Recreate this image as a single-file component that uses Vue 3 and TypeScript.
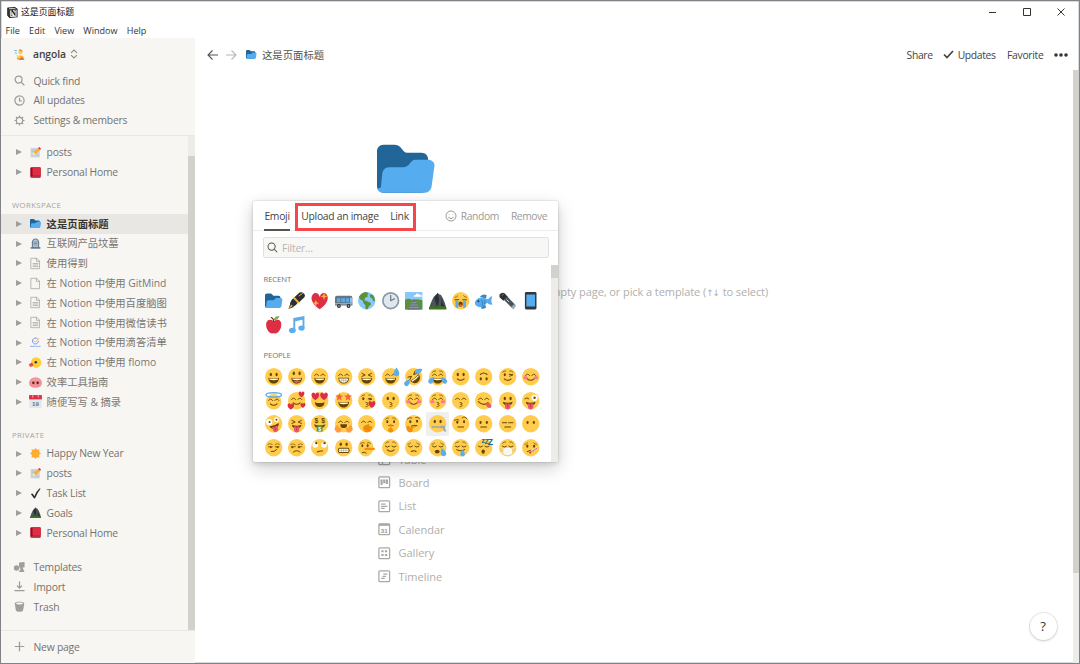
<script setup lang="ts">
import { defineComponent, h } from 'vue'

interface Shape {
  d?: string
  f?: string
  s?: string
  w?: number
  t?: string
  text?: string
  x?: number
  y?: number
  size?: number
}

const BROWN = '#664500'
const YELLOW = '#ffcc4d'
const RED = '#dd2e44'
const BLUE = '#5dadec'

const fill = (d: string, f = BROWN, t?: string): Shape => ({ d, f, t })
const line = (d: string, w = 2, s = BROWN, t?: string): Shape => ({ d, f: 'none', s, w, t })
const oval = (x: number, y: number, rx: number, ry = rx, f = BROWN, t?: string): Shape =>
  fill(`M${x - rx} ${y}a${rx} ${ry} 0 1 0 ${2 * rx} 0a${rx} ${ry} 0 1 0 ${-2 * rx} 0z`, f, t)
const label = (text: string, x: number, y: number, size: number, f: string): Shape => ({ text, x, y, size, f })
const turn = (list: Shape[], t: string): Shape[] => list.map(p => ({ ...p, t: p.t ? `${t} ${p.t}` : t }))

const base = [oval(18, 18, 18, 18, YELLOW)]
const eyes = [oval(12, 13.5, 2.4, 3.6), oval(24, 13.5, 2.4, 3.6)]
const lowEyes = [oval(11.5, 15.5, 2.3, 3), oval(24.5, 15.5, 2.3, 3)]
const happyEyes = [line('M7.5 15.5q4-6 8 0'), line('M20.5 15.5q4-6 8 0')]
const shutEyes = [line('M7 15q4 4 8.500 0'), line('M20.500 15q4 4 8.500 0')]
const squint = [line('M8 11l7 3.500l-7 3'), line('M28 11l-7 3.500l7 3')]
const grin = [fill('M7 20q11 3 22 0c0 8-5 12-11 12s-11-4-11-12z'), fill('M9 21.500q9 2 18 0v2.500q-9 2.500-18 0z', '#fff')]
const smile = [line('M11 22.500q7 6 14 0', 2.2)]
const blush = [oval(7, 20, 4.5, 3.5, '#ff7892'), oval(29, 20, 4.5, 3.5, '#ff7892')]
const kiss = [line('M16.5 21.500c6 0 5 4 1 4c5 0 5 5-1 5', 1.8)]
const flat = [line('M12 25h12', 2.2)]
const tongue = [fill('M8 20q10 4 20 0c0 5-4 8-10 8s-10-3-10-8z'), fill('M12.500 24h11v7a5.500 5 0 0 1-11 0z', '#e8596e'), line('M18 24v7', 1.2, '#be1931')]
const heart = (x: number, y: number, k: number): Shape =>
  fill('M0 8C-12 0-8-8-4-8Q-1-8 0-4Q1-8 4-8C8-8 12 0 0 8z', RED, `translate(${x} ${y}) scale(${k})`)
const star = (x: number, y: number): Shape =>
  fill('M0-8l2 5l6 .3l-4.500 4l1.500 6.500l-5-3.500l-5 3.500l1.500-6.500l-4.500-4l6-.3z', '#f0643f', `translate(${x} ${y})`)
const tear = (x: number, y: number, r = 0, k = 1): Shape =>
  fill('M0-8C4-3 5 0 5 3a5 5 0 0 1-10 0C-5 0-4-3 0-8z', BLUE, `translate(${x} ${y}) rotate(${r}) scale(${k})`)
const brows = [line('M7 9q3-4 7-3', 1.4), line('M22 6q4-1 7 3', 1.4)]
const sadBrows = [line('M6 11q4 0 6-3', 1.4), line('M30 11q-4 0-6-3', 1.4)]
const laugh = [...squint, ...grin]

const art: Record<string, Shape[]> = {
  folder: [
    fill('M0 29c0 2.200 1.800 4 4 4h24c2.200 0 4-1.800 4-4V12c0-2.200-1.800-4-4-4h-9c-3.560 0-3-5-8.440-5H4C1.800 3 0 4.800 0 7z', '#226699'),
    fill('M32 12.300h-8c-3.600 0-3 4.700-8 4.700H7.500c-2.200 0-4 1.800-4.200 4L2.500 29c-.2 1.500-2 1.700-2.500.5C0 31.500 1.800 33 4 33h26c2.200 0 4-1.800 4.200-4L36 16c.2-2.200-1.800-3.700-4-3.700z', '#55acee'),
  ],
  pen: [
    fill('M1 35l4-11l7 7z', '#292f33'), fill('M4 24q1-7 8-12l9 9q-4 7-11 10z', '#292f33'),
    fill('M12 12L24 1q5-2 9 2q4 4 1 8L22 22z', '#292f33'), fill('M10 13l3-3l11 11l-3 3z', '#ffac33'), fill('M1 35l6-9l3 3z', '#ffac33'), line('M23 8l7-5', 2, '#ffac33'),
  ],
  hearts: [heart(18, 19, 2.1), fill('M27 1l2 6l6 2l-6 2l-2 6l-2-6l-6-2l6-2z', '#ffac33'), fill('M10 16l2 5l5 2l-5 2l-2 5l-2-5l-5-2l5-2z', '#ffac33')],
  bus: [
    fill('M0 12q0-4 4-4h28q4 0 4 4v16H0z', '#66757f'), fill('M4 13h7v8H4zM13 13h8v8h-8zM23 13h6v8h-6z', '#55acee'), fill('M31 12h4v10h-4z', '#88c9f9'),
    fill('M0 23h36v3H0z', '#99aab5'), oval(8, 29, 4, 4, '#292f33'), oval(28, 29, 4, 4, '#292f33'), oval(8, 29, 1.700, 1.700, '#ccd6dd'), oval(28, 29, 1.700, 1.700, '#ccd6dd'),
  ],
  globe: [
    oval(18, 18, 18, 18, '#88c9f9'),
    fill('M2 10Q8 0 17 0l5 3l-3 3l2 3l-6 3l-2 5l6 2l7 3l1 4l-5 4l-2 5l-4 1l-1-9l-4-4l-1-5l-6-3z', '#5c913b'),
    fill('M24 5l7 1q5 6 4 14l-4-2l-2-5l-4-2z', '#5c913b'),
  ],
  clock: [oval(18, 18, 18, 18, '#8899a6'), oval(18, 18, 14.5, 14.5, '#e1e8ed'), line('M18 7v11l8-4', 2.400, '#66757f')],
  railway: [
    fill('M0 0h36v36H0z', '#88c9f9'), fill('M0 16q8-4 14 0q10-2 22 1v19H0z', '#5c913b'), fill('M18 10q0-4 4-4q3-5 7-1q6 0 6 5z', '#fff'),
    fill('M17 16h3l12 20H5z', '#66757f'), line('M14 22h9M12 27h14M9 32h19', 1.600, '#99aab5'),
  ],
  mountain: [
    fill('M0 34Q5 18 10 10l5-5l3-3l4 3l3 1l4 8q5 9 7 20z', '#4b545d'), fill('M18 2l3 14l-4 16L11 12z', '#292f33'), fill('M27 9l1 14l7 11H24z', '#292f33'), fill('M0 36v-4q7-5 13-1q10-4 23 1v4z', '#3e721d'),
  ],
  sob: [...base, ...sadBrows, line('M6 16h8M22 16h8', 2.2), fill('M7 18h6v14q-3 3-6-1z', BLUE), fill('M23 18h6v13q-3 4-6 1z', BLUE), oval(18, 25, 4.500, 5.500), oval(18, 28, 3, 2.500, '#e8596e')],
  fish: [
    fill('M1 18Q10 6 24 15q6 0 8-5l4-1q-4 10 0 17q-7 1-11-4Q14 36 3 29q-5-5-2-11z', '#55acee'),
    fill('M10 10q6-7 14-4l-1 8z', '#3b88c3'), fill('M13 31l8-5l2 6q-5 4-10 2z', '#3b88c3'), line('M14 17q3 5 1 10M20 17q2 4 0 7', 1.3, '#269'), oval(7, 19, 2, 2, '#292f33'),
  ],
  torch: [fill('M1 5Q7-1 12 3l6 7l-9 8L1 11z', '#292f33'), fill('M10 16l7-7l17 18l-6 7z', '#4b545d'), fill('M25 31l7-6l3 4l-5 7z', '#99aab5'), line('M16 16l4 4', 2, '#ccd6dd'), line('M6 7l5-3', 2, '#66757f')],
  phone: [fill('M9 0h18q3 0 3 3v30q0 3-3 3H9q-3 0-3-3V3q0-3 3-3z', '#31373d'), fill('M9 5h18v25H9z', '#55acee')],
  apple: [fill('M18 11Q29 4 33 13c3 10-4 23-11 23q-4-1-8 0C7 36 0 23 3 13q5-9 15-2z', '#dd2e44'), line('M18 11q0-6-5-8', 2.200, '#662113'), fill('M18 9q1-9 12-9q-3 9-12 9z', '#77b255')],
  music: [fill('M11 4L34 0v25h-4V8L15 11v19h-4z', BLUE), oval(9, 30, 7, 5.500, BLUE), oval(28, 25, 6.500, 5.500, BLUE)],
  memo: [fill('M2 3h30v31H2z', '#ccd6dd'), line('M6 10h14M6 15h10M6 26h22', 1.500, '#99aab5'), fill('M8 28l4-12l8 8z', '#ffe8b6'), fill('M12 17L26 3l7 7L19 24z', '#ffac33'), fill('M27 3l3-3l6 5l-3 5z', RED)],
  book: [fill('M5 1h27q3 0 3 3v28q0 3-3 3H5q-4 0-4-4V5q0-4 4-4z', '#a0041e'), fill('M8 1h24q3 0 3 3v25H8z', RED), line('M4 32h29', 1.600, '#e0798a')],
  tomb: [fill('M6 33V14C6-3 30-3 30 14v19z', '#66809a'), fill('M10 30V14C10 2 26 2 26 14v16z', '#b8c5d2'), line('M13 13h10M13 18h10M15 23h6', 2.200, '#66757f'), fill('M2 30h32v5H2z', '#66757f')],
  page: [line('M4 1h18l9 9v25H4zM21 1v10h10', 2.4, '#a3a19d')],
  pageText: [line('M4 1h18l9 9v25H4zM21 1v10h10M10 18h16M10 23h16M10 28h16', 2.4, '#a3a19d')],
  tick: [line('M24 5a10 10 0 1 0 4 9', 3, '#6d8df0'), line('M13 12l5 5l11-12', 3, '#ffac33'), line('M2 31h5M11 31h4M20 31h4M29 31h4', 4, '#9db4f2')],
  bird: [oval(20, 18, 17, 17, '#ffcf35'), fill('M7 18L-4 24l4 8q6 1 11-5z', '#e84a3c'), oval(19, 17, 4, 4, '#31373d')],
  pig: [fill('M3 6Q18-4 33 6q11 14 2 24Q18 40 1 30Q-8 20 3 6z', '#f08f98'), oval(11, 19, 4, 4.500, '#662113'), oval(25, 19, 4, 4.500, '#662113'), line('M5 12q12-7 25-2', 2, '#f7b6bb')],
  calendar: [fill('M-2 0h40v36q0 3-3 3H1q-3 0-3-3z', '#e1e8ed'), fill('M-3-3h42v14H-3z', RED), label('19', 18, 32, 20, '#66757f'), line('M9-1v5M27-1v5', 2, '#fff')],
  sun: [fill('M18 0l5 6l8-2l-1 8l6 6l-6 4l1 9l-8-1l-5 6l-5-6l-8 1l1-9l-6-4l6-6l-1-8l8 2z', '#ffac33')],
  check: [fill('M3 20q4-4 7 0l4 7Q20 12 31 2q3-2 3 1Q23 17 18 31q-3 6-7 0z', '#292f33')],
  person: [oval(21, 10, 7, 8, '#ffcc4d'), fill('M9 34q0-13 12-13t13 13z', '#ffac33'), fill('M15 6q4-9 12-2l1 7l-4-4z', '#e09a3c'), line('M2 5h6M4 13h4', 3, BLUE), line('M10 20q3 7 10 9', 4, '#ffdc5d'), fill('M14 35l11-8l9 8z', '#c1694f')],
  grinning: [...base, ...eyes, ...grin],
  smiley: [...base, oval(12, 11, 2.400, 4), oval(24, 11, 2.400, 4), ...grin, fill('M11 28q7-4 14 0q-7 5-14 0z', '#e8596e')],
  smile: [...base, ...happyEyes, ...grin],
  beam: [...base, ...happyEyes, fill('M7 20h22q0 12-11 12T7 20z'), fill('M8.500 21.500h19q-1 8-9.500 9q-8.500-1-9.500-9z', '#fff'), line('M9 25.500h18M14 22v8M18 22v8M22 22v8', 0.800, '#8b7650')],
  laughing: [...base, ...laugh],
  sweat: [...base, ...happyEyes, ...grin, tear(30, 8, 0, 1.150)],
  rofl: [...turn([...base, ...laugh], 'rotate(-40 18 18)'), tear(5, 30, 40, 1), tear(29, 6, 65, 1)],
  joy: [...base, ...brows, ...happyEyes, ...grin, tear(5, 25, 35, 1), tear(31, 25, -35, 1)],
  slight: [...base, ...eyes, ...smile],
  upside: turn([...base, ...eyes, ...smile], 'rotate(180 18 18)'),
  wink: [...base, ...brows, oval(12, 14, 2.300, 3), line('M21 13l8 1l-7 3'), ...smile],
  blush: [...base, ...blush, ...happyEyes, ...smile],
  halo: [oval(18, 20, 16, 16, YELLOW), ...turn([...happyEyes, ...smile], 'translate(0 2)'), line('M2 6a16 4.500 0 1 0 32 0a16 4.500 0 1 0-32 0', 3, '#5dadec')],
  adore: [...base, ...happyEyes, ...smile, heart(28, 5, 0.750), heart(6, 30, 0.850), heart(31, 28, 0.650)],
  hearteyes: [...base, heart(9, 9, 1), heart(27, 9, 1), fill('M8 21q10 4 20 0c0 6-4 10-10 10s-10-4-10-10z')],
  starstruck: [...base, star(9, 10), star(27, 10), ...grin],
  blowkiss: [...base, ...brows, oval(11, 14, 2.300, 3), line('M21 14q4-3 8 1l-6 1'), ...kiss, heart(29, 26, 0.900)],
  kissing: [...base, ...eyes, ...kiss],
  relaxed: [...base, ...brows, ...blush, ...happyEyes, ...smile],
  kissclosed: [...base, ...brows, ...blush, ...happyEyes, ...kiss],
  kisssmile: [...base, ...happyEyes, ...kiss],
  yum: [...base, ...happyEyes, line('M7 20q10 10 20 2', 2.200), fill('M22 25l7-3q8 7 3 11q-7 1-10-8z', '#e8596e')],
  tongue: [...base, ...eyes, ...tongue],
  winktongue: [...base, line('M6 14q4-4 8 0'), oval(26, 12, 6.500, 6.500, '#fff'), oval(26, 12, 2.500, 2.500), ...tongue],
  zany: [...turn([...base, oval(10, 12, 6.500, 6.500, '#fff'), oval(26, 12, 5, 5, '#fff'), oval(11, 12, 2.200), oval(26, 12, 2), ...tongue], 'rotate(-18 18 18)')],
  squinttongue: [...base, ...squint, ...tongue],
  money: [...base, label('$', 11, 17, 14, BROWN), label('$', 25, 17, 14, BROWN), fill('M6 19q12 5 24 0l-3 6q-9 4-18 0z'), fill('M12 22h12v12H12z', '#5c913b'), label('$', 18, 33, 11, '#fff')],
  hug: [...base, ...happyEyes, fill('M11 19h14q0 8-7 8t-7-8z'), fill('M1 22l5-1l2 5l6 1l-3 9H4l-5-6z', '#ff9d3a'), fill('M35 22l-5-1l-2 5l-6 1l3 9h7l5-6z', '#ff9d3a')],
  oops: [...base, ...happyEyes, fill('M13 34q-5-8 0-12l9-4q3 0 1 4l7 2l-3 9q-6 5-14 1z', '#f4900c'), line('M16 23l7 3M14 27l8 3', 1.200, '#d07a05')],
  shush: [...base, ...brows, oval(11, 14, 2.200, 3), oval(25, 14, 2.200, 3), line('M13 22q5-3 10 0', 1.6), fill('M16.500 20q1.500-2 3 0v7l4 3q0 6-6 6q-5 0-5-7l4-2z', '#f4900c')],
  think: [...base, line('M5 8q4-4 9-2', 1.8), line('M22 5q5-2 8 2', 1.8), oval(11, 14, 2.300, 3), oval(25, 13, 2.300, 3), line('M13 23q6-3 12-1', 2), fill('M3 23l5-1l2 4l13-4q1 3-7 5q2 9-6 9q-8-1-7-13z', '#f4900c')],
  zip: [...base, ...eyes, line('M7 25h22', 3, '#8899a6'), line('M9 23v4M13 23v4M17 23v4M21 23v4', 1, '#ccd6dd'), fill('M25 22h8v5l3 7h-5l-3-7h-3z', '#99aab5')],
  brow: [...base, line('M5 11q5-3 9-1', 1.8), line('M21 6q5-5 10 2', 1.8), oval(11, 15, 2.300, 3), oval(25, 14, 2.300, 3), ...flat],
  neutral: [...base, ...lowEyes, ...flat],
  deadpan: [...base, line('M7 16h9M20 16h9'), ...flat],
  mouthless: [...base, ...lowEyes],
  smirk: [...base, line('M6 11q4-3 9 0M21 11q4-3 9 0', 1.300), line('M7 16h8M21 16h8', 1.6), oval(12, 17, 2), oval(26, 17, 2), line('M13 26q7 1 11-4', 2)],
  unamused: [...base, line('M6 11q4-3 9 1M21 12q4-4 9-1', 1.300), line('M7 16h8M21 16h8', 1.6), oval(9, 17, 2), oval(23, 17, 2), line('M11 27q7-6 14 0', 2)],
  roll: [...base, oval(9, 12, 6, 6, '#fff'), oval(27, 12, 6, 6, '#fff'), oval(11, 8.500, 2.500), oval(28, 8.500, 2.500), line('M13 27q5-3 11-2', 2.200)],
  grimace: [...base, oval(12, 11, 2.400, 3.500), oval(24, 11, 2.400, 3.500), fill('M9 18h18q3 0 3 5.500t-3 5.500H9q-3 0-3-5.500T9 18z'), fill('M9 20h18q1 0 1 3.500t-1 3.500H9q-1 0-1-3.500T9 20z', '#fff'), line('M8 23.500h20M13 20v7M18 20v7M23 20v7', 0.8, '#8b7650')],
  lying: [oval(16, 18, 16, 18, YELLOW), line('M5 9q4-3 8-1M19 8q4-2 7 1', 1.400), oval(9, 14, 2, 3), oval(20, 14, 2, 3), line('M9 28q4-2 8 1', 2), fill('M15 18h18q5 2.500 0 5H15q-4-2.500 0-5z', '#f4900c')],
  relieved: [...base, ...brows, ...shutEyes, ...smile],
  pensive: [...base, ...sadBrows, ...shutEyes, line('M13 26q5-3 10 0', 2.200)],
  sleepy: [...base, ...sadBrows, ...shutEyes, oval(17, 26, 5, 4), tear(29, 27, -20, 1.100)],
  drool: [...base, ...brows, ...shutEyes, line('M10 22q8 5 16 0', 2.200), tear(22, 29, 0, 0.900)],
  sleeping: [...base, ...shutEyes, oval(17, 26, 3.500, 4.500), label('z', 17, 8, 14, '#226699'), label('Z', 24, 10, 15, '#226699'), label('Z', 32, 12, 18, '#226699')],
  mask: [...base, ...brows, ...shutEyes, line('M1 17l9 4M35 17l-9 4M4 28l7-1M32 28l-7-1', 1.500, '#e1e8ed'), fill('M9 20q9-4 18 0v11q-9 5-18 0z', '#f5f8fa')],
  sick: [...base, ...sadBrows, oval(11, 15, 2.300, 3), oval(25, 15, 2.300, 3), line('M11 26q6-5 12-1', 2), line('M17 27l14-8', 4, '#e1e8ed'), line('M20 26l11-7', 1.500, RED), oval(17, 28, 2.4, 2.4, RED)],
}

const Glyph = defineComponent({
  props: { name: { type: String, required: true } },
  setup(props) {
    return () =>
      h('svg', { viewBox: '0 0 36 36', 'aria-hidden': 'true' }, (art[props.name] ?? []).map(p =>
        p.text
          ? h('text', { x: p.x, y: p.y, fill: p.f, 'font-size': p.size, 'font-weight': 700, 'text-anchor': 'middle', 'font-family': 'Liberation Sans, sans-serif' }, p.text)
          : h('path', { d: p.d, fill: p.f, stroke: p.s, 'stroke-width': p.w, transform: p.t, 'stroke-linecap': 'round', 'stroke-linejoin': 'round' }),
      ))
  },
})

const hasHan = (s: string) => /[\u4e00-\u9fff]/.test(s)

const menus = ['File', 'Edit', 'View', 'Window', 'Help']
const pinned = [['memo', 'posts'], ['book', 'Personal Home']]
const workspace = [
  ['folder', '这是页面标题'], ['tomb', '互联网产品坟墓'], ['pageText', '使用得到'],
  ['page', '在 Notion 中使用 GitMind'], ['pageText', '在 Notion 中使用百度脑图'],
  ['pageText', '在 Notion 中使用微信读书'], ['tick', '在 Notion 中使用滴答清单'],
  ['bird', '在 Notion 中使用 flomo'], ['pig', '效率工具指南'], ['calendar', '随便写写 & 摘录'],
]
const privatePages = [['sun', 'Happy New Year'], ['memo', 'posts'], ['check', 'Task List'], ['mountain', 'Goals'], ['book', 'Personal Home']]
const sections = [
  { title: '', rows: pinned },
  { title: 'WORKSPACE', rows: workspace },
  { title: 'PRIVATE', rows: privatePages },
]
const recent = 'folder pen hearts bus globe clock railway mountain sob fish torch phone apple music'.split(' ')
const people = (
  'grinning smiley smile beam laughing sweat rofl joy slight upside wink blush ' +
  'halo adore hearteyes starstruck blowkiss kissing relaxed kissclosed kisssmile yum tongue winktongue ' +
  'zany squinttongue money hug oops shush think zip brow neutral deadpan mouthless ' +
  'smirk unamused roll grimace lying relieved pensive sleepy drool sleeping mask sick'
).split(' ')
const templates = [
  { name: 'Table', d: 'M1 5h12M1 9h12M5 5v8' },
  { name: 'Board', d: 'M4 4v6M7 4v4M10 4v5' },
  { name: 'List', d: 'M3.500 4.500h5M3.500 7h7M3.500 9.500h4' },
  { name: 'Calendar', d: 'M1 2h12' },
  { name: 'Gallery', d: 'M3.700 4.700h2.600M7.700 4.700h2.600M3.700 9h2.600M7.700 9h2.600' },
  { name: 'Timeline', d: 'M6 4.500h4.500M5 7h4M3.500 9.500h4' },
]
</script>

<template>
  <div class="window">
    <header class="titlebar">
      <svg class="logo" viewBox="0 0 12 12"><path d="M1 1.200l7.500-.6L11 2.400v8.400l-8 .6L1 9z" fill="#fff" stroke="#222" stroke-width="1.100" /><path d="M1 1.200l2 1.900v8.300L1 9zM3 3l8-.6" fill="#444" stroke="#222" /><text x="7" y="9.600" font-size="8" font-weight="700" text-anchor="middle" font-family="Liberation Serif, serif">N</text></svg>
      <span class="app-title">这是页面标题</span>
      <div class="controls">
        <svg viewBox="0 0 10 10"><path d="M2 5.500h7" /></svg>
        <svg viewBox="0 0 10 10"><path d="M1.500 1.500h7v7h-7z" /></svg>
        <svg viewBox="0 0 10 10"><path d="M1.500 1.500l7 7M8.500 1.500l-7 7" /></svg>
      </div>
    </header>
    <nav class="menubar"><span v-for="m in menus" :key="m">{{ m }}</span></nav>
    <div class="body">
      <aside class="sidebar">
        <div class="account">
          <Glyph name="person" class="avatar" />
          <b>angola</b>
          <svg class="updown" viewBox="0 0 8 10"><path d="M1 3.800L4 1l3 2.800M1 6.200L4 9l3-2.800" /></svg>
        </div>
        <div class="quick">
          <div class="nav-row"><svg viewBox="0 0 12 12"><circle cx="5" cy="5" r="3.800" /><path d="M7.700 7.700l3.600 3.600" /></svg>Quick find</div>
          <div class="nav-row"><svg viewBox="0 0 12 12"><circle cx="6" cy="6" r="5" /><path d="M6 3v3.300h2.500" /></svg>All updates</div>
          <div class="nav-row"><svg viewBox="0 0 12 12"><circle cx="6" cy="6" r="3.500" /><path d="M6 .5v2M6 9.500v2M.5 6h2M9.500 6h2M2.100 2.100l1.400 1.400M8.500 8.500l1.400 1.400M2.100 9.900l1.400-1.400M8.500 3.500l1.400-1.400" /></svg>Settings &amp; members</div>
        </div>
        <div class="tree">
          <div class="tree-content">
            <section v-for="s in sections" :key="s.title">
              <h2 v-if="s.title">{{ s.title }}</h2>
              <div v-for="(r, i) in s.rows" :key="i" class="page-row" :class="{ han: hasHan(r[1]), active: s.title === 'WORKSPACE' && i === 0 }">
                <i class="caret"></i><Glyph :name="r[0]" class="page-icon" /><span>{{ r[1] }}</span>
              </div>
            </section>
            <div class="tools">
              <div class="nav-row"><svg class="solid" viewBox="0 0 12 12"><path d="M5.500.500l6-.5V6H9.300l2.200 5H5.300l1.900-3.500L5.500 5z" /><circle cx="2.800" cy="6.500" r="3" /></svg>Templates</div>
              <div class="nav-row"><svg viewBox="0 0 12 12"><path d="M6 .5v7M3.300 5L6 7.700 8.700 5M.5 10.500h11" /></svg>Import</div>
              <div class="nav-row"><svg class="solid" viewBox="0 0 12 12"><path fill-rule="evenodd" d="M.8 2.500C.8.2 11.200.2 11.200 2.500L10 10Q9.500 11.700 6 11.700T2 10zM2.300 2.700c0 1.500 7.400 1.500 7.400 0s-7.400-1.500-7.400 0z" /></svg>Trash</div>
            </div>
          </div>
          <div class="side-track"><div class="side-thumb"></div></div>
        </div>
        <div class="nav-row new-page"><svg viewBox="0 0 12 12"><path d="M6 .8v10.400M.8 6h10.400" /></svg>New page</div>
      </aside>

      <main class="main">
        <div class="topbar">
          <svg class="arrow" viewBox="0 0 12 12"><path d="M11 6H1M5.500 1.500L1 6l4.500 4.500" /></svg>
          <svg class="arrow dim" viewBox="0 0 12 12"><path d="M1 6h10M6.500 1.500L11 6l-4.500 4.500" /></svg>
          <Glyph name="folder" class="crumb-icon" />
          <span class="crumb">这是页面标题</span>
          <div class="actions">
            <span class="share">Share</span>
            <svg class="upd-check" viewBox="0 0 11 9"><path d="M1 4.500l3 3L10 1" /></svg>
            <span class="updates">Updates</span>
            <span class="favorite">Favorite</span>
            <svg class="dots" viewBox="0 0 14 4"><circle cx="2" cy="2" r="1.800" /><circle cx="7" cy="2" r="1.800" /><circle cx="12" cy="2" r="1.800" /></svg>
          </div>
        </div>
        <div class="document">
          <Glyph name="folder" class="cover-icon" />
          <p class="hint">Press Enter to continue with an empty page, or pick a template (<span class="arrows">↑↓</span> to select)</p>
          <ul class="templates">
            <li v-for="t in templates" :key="t.name">
              <svg viewBox="0 0 14 14"><rect x="1" y="1" width="12" height="12" rx="1" /><path :d="t.d" :class="{ thick: t.name === 'Gallery' || t.name === 'Calendar' || t.name === 'Board' }" /><text v-if="t.name === 'Calendar'" x="7" y="11" font-size="7" font-weight="700" text-anchor="middle">31</text></svg>
              <span>{{ t.name }}</span>
            </li>
          </ul>
        </div>
        <div class="main-track"><div class="main-thumb"></div></div>

        <div class="picker">
          <div class="tabs">
            <span class="tab current">Emoji</span>
            <span class="tab upload">Upload an image</span>
            <span class="tab link">Link</span>
            <div class="marker"></div>
            <svg class="face" viewBox="0 0 12 12"><circle cx="6" cy="6" r="5" /><path d="M3.300 7.200q2.700 3 5.400 0M4.200 4.300v.5M7.800 4.300v.5" /></svg>
            <span class="random">Random</span>
            <span class="remove">Remove</span>
          </div>
          <div class="filter"><svg viewBox="0 0 12 12"><circle cx="5" cy="5" r="3.900" /><path d="M8 8l3.200 3.200" /></svg><span>Filter…</span></div>
          <div class="scroller">
            <div class="groups">
              <h3>RECENT</h3>
              <div class="grid"><span v-for="e in recent" :key="e"><Glyph :name="e" /></span></div>
              <h3 class="second">PEOPLE</h3>
              <div class="grid"><span v-for="e in people" :key="e" :class="{ hover: e === 'zip' }"><Glyph :name="e" /></span></div>
            </div>
            <div class="pick-track"><div class="pick-thumb"></div></div>
          </div>
        </div>
        <div class="help">?</div>
      </main>
    </div>
  </div>
</template>

<style>
body { margin: 0; background: #fff; overflow: hidden; }
</style>
<style scoped>
* { box-sizing: border-box; }
svg { display: block; flex: none; overflow: visible; }
.window { width: 1080px; height: 664px; border: 1px solid #808287; box-shadow: inset 0 0 0 .5px #b5b6b8; background: #fff; display: flex; flex-direction: column; font: 10.35px/1 "Open Sans", "Noto Sans CJK SC", sans-serif; color: #37352f; overflow: hidden; white-space: nowrap; }
.titlebar { height: 22px; display: flex; align-items: center; padding-left: 6px; flex: none; }
.logo { width: 11px; height: 11px; margin-right: 3px; }
.app-title { font-size: 8.900px; color: #111; padding-top: 1px; }
.controls { margin-left: auto; display: flex; gap: 24.300px; padding-right: 13px; }
.controls svg { width: 10px; height: 10px; fill: none; stroke: #333; stroke-width: 1; }
.menubar { height: 15px; flex: none; display: flex; align-items: center; gap: 9.200px; padding-left: 4.600px; font-size: 9.050px; color: #333; }
.body { flex: 1; min-height: 0; display: flex; }
.sidebar { width: 194px; flex: none; background: #f7f6f3; display: flex; flex-direction: column; color: #75736e; font-weight: 500; letter-spacing: -.21px; }
.account { height: 32.600px; display: flex; align-items: center; padding-left: 13px; color: #45433e; flex: none; }
.account b { font-weight: 600; margin-left: 8px; letter-spacing: -.1px; }
.avatar { width: 11px; height: 11px; }
.updown { width: 8px; height: 10px; margin-left: 4.500px; fill: none; stroke: #8f8d88; stroke-width: 1.100; }
.quick { height: 65.900px; flex: none; border-bottom: 1px solid #e9e8e5; padding-top: .3px; }
.nav-row { height: 19.800px; display: flex; align-items: center; padding-left: 13px; gap: 8.500px; flex: none; }
.nav-row svg { width: 11px; height: 11px; fill: none; stroke: #9d9b97; stroke-width: 1.350; }
.nav-row svg.solid { fill: #a09e9a; stroke: none; }
.tree { flex: 1; min-height: 0; display: flex; overflow: hidden; }
.tree-content { width: 187px; padding-top: 5.900px; }
section h2 { font-size: 7.800px; font-weight: 500; letter-spacing: .35px; color: #a6a4a0; margin: 14px 0 0; height: 18px; line-height: 19px; padding-left: 11px; }
.page-row { height: 19.790px; display: flex; align-items: center; padding-left: 15px; }
.page-row.han { font-weight: 400; letter-spacing: -.05px; color: #7a7874; }
.page-row.active { background: #e8e7e4; color: #37352f; font-weight: 700; letter-spacing: 0; }
.caret { border-left: 6px solid #a09e9a; border-top: 3px solid transparent; border-bottom: 3px solid transparent; }
.page-icon { width: 11px; height: 11px; margin: 0 5.300px 0 8.300px; }
.tools { margin-top: 14.600px; }
.side-track { width: 7px; background: #edece9; padding-top: 20px; display: flex; }
.side-thumb { width: 7px; background: #d3d1cb; }
.new-page { height: 33.500px; border-top: 1px solid #e9e8e5; }
.main { flex: 1; min-width: 0; position: relative; display: flex; flex-direction: column; }
.topbar { height: 33px; flex: none; display: flex; align-items: center; padding: 0 11px 0 12px; }
.arrow { width: 12px; height: 12px; fill: none; stroke: #55534e; stroke-width: 1.100; margin-right: 5.500px; }
.arrow.dim { stroke: #b9b8b5; margin-right: 9px; }
.crumb-icon { width: 10.500px; height: 10.500px; }
.crumb { margin-left: 6px; padding-top: 1px; color: #55534e; }
.actions { margin-left: auto; display: flex; align-items: center; letter-spacing: -.3px; color: #45433e; }
.actions span { padding-top: 1px; }
.upd-check { width: 11px; height: 9px; margin: 0 3.500px 0 10.500px; fill: none; stroke: #45433e; stroke-width: 1.700; }
.share, .updates { letter-spacing: -.35px; }
.favorite { margin: 0 10.500px 0 11.500px; }
.dots { width: 14px; height: 4px; fill: #37352f; }
.document { padding: 69px 0 0 182px; }
.cover-icon { width: 57.500px; height: 57.500px; }
.hint { margin: 86px 0 0 7px; height: 16px; line-height: 16px; color: #b0afac; font-size: 11px; letter-spacing: -.08px; }
.arrows { font-family: "DejaVu Sans", sans-serif; font-size: 9px; letter-spacing: -1.300px; margin-right: 1.300px; }
.templates { list-style: none; margin: 148px 0 0; padding: 0; color: #b0aeab; }
.templates li { height: 23.400px; display: flex; align-items: center; gap: 8px; padding-left: 1px; font-size: 11px; }
.templates svg { width: 12.500px; height: 12.500px; fill: none; stroke: #aaa9a5; stroke-width: 1.400; }
.templates .thick { stroke-width: 2.400; }
.templates text { fill: #999894; stroke: none; font-family: "Liberation Sans", sans-serif; }
.main-track { position: absolute; right: 0; top: 32px; bottom: 0; width: 6px; background: #edece9; }
.main-thumb { height: 503px; background: #d3d1cb; }
.picker { position: absolute; left: 58px; top: 163px; width: 305px; height: 260.500px; background: #fff; border-radius: 2px; box-shadow: 0 0 0 1px rgba(15,15,15,.05), 0 2px 5px rgba(15,15,15,.12), 0 6px 18px rgba(15,15,15,.2); display: flex; flex-direction: column; overflow: hidden; }
.tabs { height: 30px; flex: none; border-bottom: 1px solid #ececea; display: flex; align-items: center; padding: 0 11px 0 11.400px; position: relative; letter-spacing: -.28px; color: #45433e; }
.tabs > span { padding-top: 1px; }
.tab.current { line-height: 29px; border-bottom: 2px solid #55534e; align-self: flex-start; height: 30px; }
.upload { margin-left: 11.500px; }
.link { margin-left: 11.500px; }
.marker { position: absolute; left: 41.500px; top: 2px; width: 121px; height: 28px; border: 3px solid #f5464a; }
.face { width: 12px; height: 12px; margin-left: auto; fill: none; stroke: #9b9a96; stroke-width: 1; }
.random { margin-left: 4px; color: #9b9a96; letter-spacing: -.42px; }
.remove { margin-left: 12px; color: #9b9a96; letter-spacing: -.48px; }
.filter { margin: 6px 9.500px 0 9.500px; height: 21px; flex: none; border: 1px solid #e2e1df; border-radius: 2px; background: #f7f7f5; display: flex; align-items: center; padding-left: 3.500px; gap: 4px; color: #b7b5b2; letter-spacing: -.2px; }
.filter span { padding-top: 1px; }
.filter svg { width: 11px; height: 11px; fill: none; stroke: #55534e; stroke-width: 1.100; }
.scroller { flex: 1; margin-top: 7px; display: flex; min-height: 0; }
.groups { padding-left: 8.500px; width: 298px; flex: none; }
.groups h3 { margin: 6.400px 0 0 2px; height: 18px; line-height: 16px; font-size: 7.700px; font-weight: 400; letter-spacing: -.1px; color: #74726d; }
.groups h3.second { margin-top: 11.200px; }
.grid { display: grid; grid-template-columns: repeat(12, 23.440px); grid-auto-rows: 23.440px; }
.grid span { display: grid; place-items: center; border-radius: 2px; }
.grid .hover { background: #efefee; }
.grid svg { width: 17.400px; height: 17.400px; }
.pick-track { width: 7px; background: #edece9; }
.pick-thumb { height: 13px; background: #d3d1cb; }
.help { position: absolute; right: 22.500px; bottom: 23px; width: 27px; height: 27px; border-radius: 50%; background: #fff; display: grid; place-items: center; font-size: 13px; font-weight: 500; box-shadow: 0 0 0 1px rgba(15,15,15,.08), 0 1px 3px rgba(15,15,15,.15); }
</style>
